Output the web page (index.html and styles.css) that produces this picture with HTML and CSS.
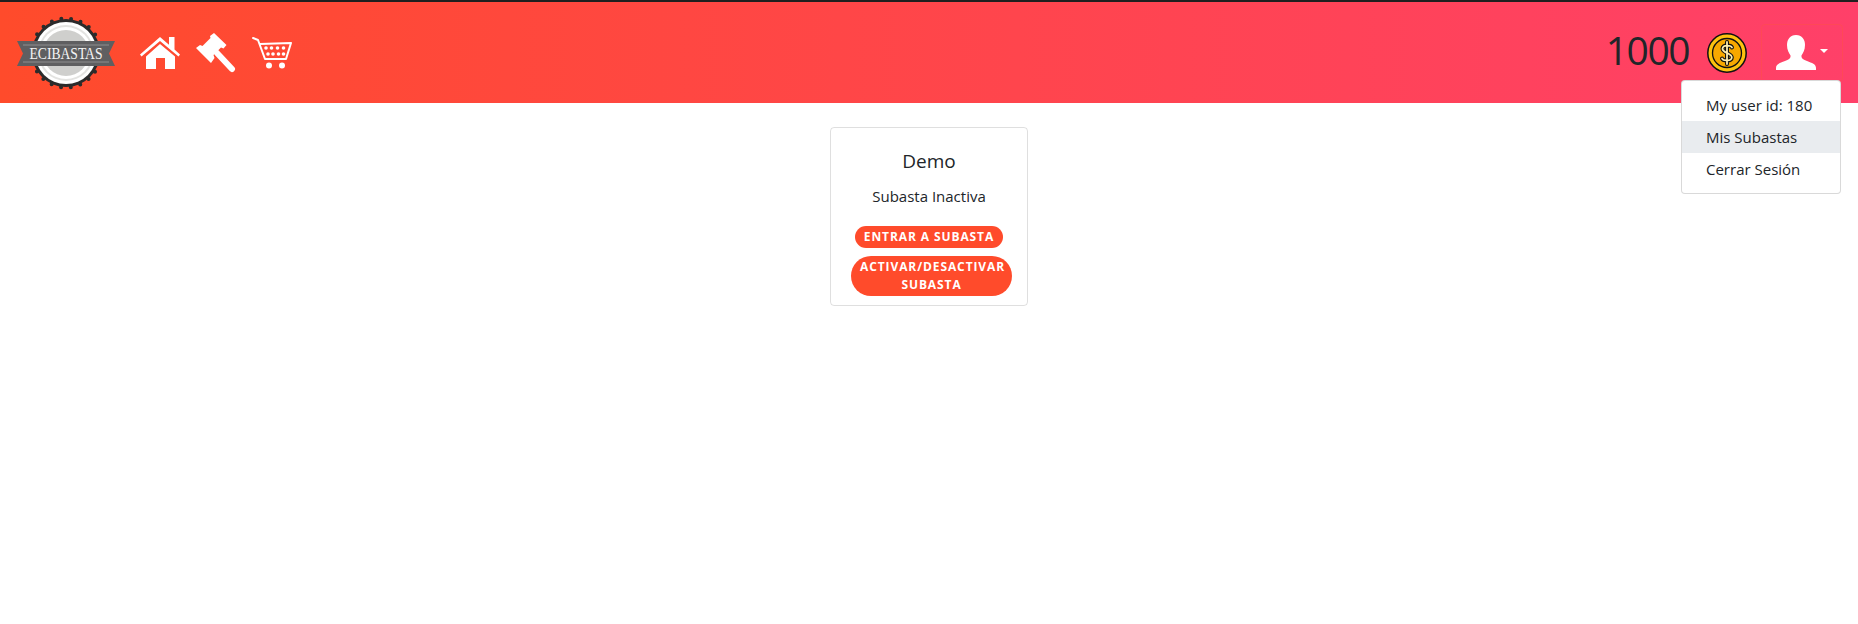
FILE: index.html
```html
<!DOCTYPE html>
<html lang="es">
<head>
<meta charset="utf-8">
<title>Ecibastas</title>
<link rel="stylesheet" href="styles.css">
</head>
<body>
<header class="navbar">
  <svg class="logo" viewBox="0 0 98 76" aria-label="Ecibastas">
    <circle cx="49" cy="38" r="34" fill="#2b2b2b"/>
    <circle cx="49" cy="38" r="34.500" fill="none" stroke="#2b2b2b" stroke-width="4" stroke-linecap="round" stroke-dasharray="0 9.850"/>
    <circle cx="49" cy="38" r="31" fill="#fff"/>
    <circle cx="49" cy="38" r="28" fill="#e3e3e1"/>
    <circle cx="49" cy="38" r="26" fill="#fff"/>
    <circle cx="49" cy="38" r="23" fill="#cfcfcd"/>
    <polygon fill="#5f5f61" points="0,26 98,26 92,38.500 98,51 0,51 6,38.500"/>
    <path d="M6 30H92M6 47H92" stroke="#8f8f90" stroke-width="1" fill="none"/>
    <text class="logo-text" x="49" y="43.500" text-anchor="middle" textLength="73" lengthAdjust="spacingAndGlyphs">ECIBASTAS</text>
  </svg>
  <nav class="nav-icons">
    <a class="nav-icon" href="#" aria-label="Inicio">
      <svg viewBox="0 0 40 34" width="40" height="34"><path fill="#fff" d="M20 1 29 8.800V1H34.500V13.500L40 18.500 38.500 20.500 20 5 1.500 20.500 0 18.500ZM20 8 35 20.500V33H25V22H16V33H6V20.500Z"/></svg>
    </a>
    <a class="nav-icon" href="#" aria-label="Subastas">
      <svg viewBox="0 0 40 40" width="40" height="40">
        <path fill="#fff" d="M18 0 30.500 12 27.500 15.500 25 14.500 17.500 22 18.500 25 15 30 0 15 4 12 6.500 13 14.500 5 14 3Z"/>
        <path fill="none" stroke="#fff" stroke-width="6" stroke-linecap="round" d="M21 20 36 36"/>
      </svg>
    </a>
    <a class="nav-icon" href="#" aria-label="Carrito">
      <svg viewBox="0 0 40 34" width="40" height="34">
        <path fill="none" stroke="#fff" stroke-width="2" stroke-linecap="round" stroke-linejoin="round" d="M1 2 6 4 13 23H34L39 7 8 8"/>
        <g fill="#fff"><circle cx="17" cy="29.500" r="3"/><circle cx="30" cy="29.500" r="3"/>
          <circle cx="14" cy="12" r="1.800"/><circle cx="19.500" cy="12" r="1.800"/><circle cx="25.500" cy="12" r="1.800"/><circle cx="31.500" cy="12" r="1.800"/>
          <circle cx="16" cy="18" r="1.800"/><circle cx="21" cy="18" r="1.800"/><circle cx="26.500" cy="18" r="1.800"/><circle cx="31.500" cy="18" r="1.800"/></g>
      </svg>
    </a>
  </nav>
  <div class="nav-right">
    <span class="coins">1000</span>
    <svg class="coin" viewBox="0 0 40 40" width="40" height="40">
      <circle cx="20" cy="20" r="19.200" fill="#fdc20f" stroke="#111" stroke-width="1.500"/>
      <circle cx="20" cy="20" r="14.500" fill="#f8a800" stroke="#111" stroke-width="1.300"/>
      <path fill="none" stroke="#111" stroke-width="4" stroke-linecap="round" d="M25 14.500C24 12 16 11.500 15.500 15.500 15 20 25 20 24.800 24.500 24.500 28.500 16 28 15 25.500M20 9V31"/>
      <path fill="none" stroke="#fdeeb0" stroke-width="1.800" stroke-linecap="round" d="M25 14.500C24 12 16 11.500 15.500 15.500 15 20 25 20 24.800 24.500 24.500 28.500 16 28 15 25.500M20 9V31"/>
    </svg>
    <div class="user-menu">
      <button class="user-btn" type="button" aria-label="Usuario">
        <svg viewBox="0 0 40 35" width="40" height="35"><path fill="#fff" d="M20 0C26 0 29 4.500 29 10 29 15 27 18 25.500 20.500 25 23 27 24.500 31 26 36 28 40 29 40 33V35H0V33C0 29 4 28 9 26 13 24.500 15 23 14.500 20.500 13 18 11 15 11 10 11 4.500 14 0 20 0Z"/></svg>
        <span class="caret"></span>
      </button>
      <ul class="dropdown">
        <li class="dropdown-item">My user id: 180</li>
        <li class="dropdown-item active">Mis Subastas</li>
        <li class="dropdown-item">Cerrar Sesión</li>
      </ul>
    </div>
  </div>
</header>
<main class="content">
  <section class="card">
    <h5 class="card-title">Demo</h5>
    <p class="card-text">Subasta Inactiva</p>
    <button class="pill" type="button">Entrar a subasta</button>
    <button class="pill pill-wide" type="button">Activar/Desactivar subasta</button>
  </section>
</main>
</body>
</html>
```
FILE: styles.css
```css
* { box-sizing: border-box; }
html, body { margin: 0; height: 100%; }
body {
  background: #fff;
  color: #212529;
  font-family: "Open Sans", "Noto Sans", sans-serif;
  font-size: 15px;
  line-height: 24px;
}
.navbar {
  display: flex;
  align-items: center;
  height: 103px;
  padding: 0 15px 0 17px;
  border-top: 2px solid #1f1f1f;
  background: linear-gradient(to right, #ff4b2b, #ff4069);
}
.logo { width: 98px; height: 76px; display: block; overflow: visible; }
.logo-text { font-family: "Liberation Serif", serif; font-size: 16.5px; fill: #f4f4f4; }
.nav-icons { display: flex; align-items: center; gap: 16px; margin-left: 25px; }
.nav-icon { display: block; line-height: 0; }
.nav-right { display: flex; align-items: center; margin-left: auto; }
.coins { font-size: 39px; line-height: 48px; letter-spacing: -1.5px; margin: -6px 18px 0 0; }
.coin { display: block; margin-right: 14px; }
.user-menu { position: relative; }
.user-btn {
  display: flex;
  align-items: center;
  width: 82px;
  height: 58px;
  padding: 0 0 0 14px;
  background: transparent;
  border: 1px solid rgba(255, 75, 80, 0.7);
  border-radius: 4px;
}
.caret {
  margin: 0 0 3px 4px;
  border-top: 4px solid #fff;
  border-left: 4px solid transparent;
  border-right: 4px solid transparent;
}
.dropdown {
  position: absolute;
  top: 56px;
  right: 2px;
  width: 160px;
  margin: 0;
  padding: 8px 0;
  list-style: none;
  background: #fff;
  border: 1px solid rgba(0, 0, 0, 0.15);
  border-radius: 4px;
}
.dropdown-item { height: 32px; padding: 4px 24px; white-space: nowrap; }
.dropdown-item.active { background: #e9ecef; }
.content { display: flex; justify-content: center; padding-top: 24px; }
.card {
  display: flex;
  flex-direction: column;
  align-items: center;
  width: 198px;
  height: 179px;
  padding-top: 21px;
  border: 1px solid rgba(0, 0, 0, 0.125);
  border-radius: 4px;
}
.card-title { margin: 0 0 11px; font-size: 19px; font-weight: 400; line-height: 24px; }
.card-text { margin: 0 0 18px; font-size: 15px; line-height: 24px; }
.pill {
  display: block;
  max-width: 161px;
  margin-bottom: 8px;
  padding: 2px 9px;
  border: 0;
  border-radius: 20px;
  background: #ff4b2b;
  color: #fff;
  font-family: "Open Sans", sans-serif;
  font-size: 12px;
  font-weight: 700;
  line-height: 18px;
  letter-spacing: 0.9px;
  text-transform: uppercase;
}
.pill-wide { margin-left: 5px; }
```
